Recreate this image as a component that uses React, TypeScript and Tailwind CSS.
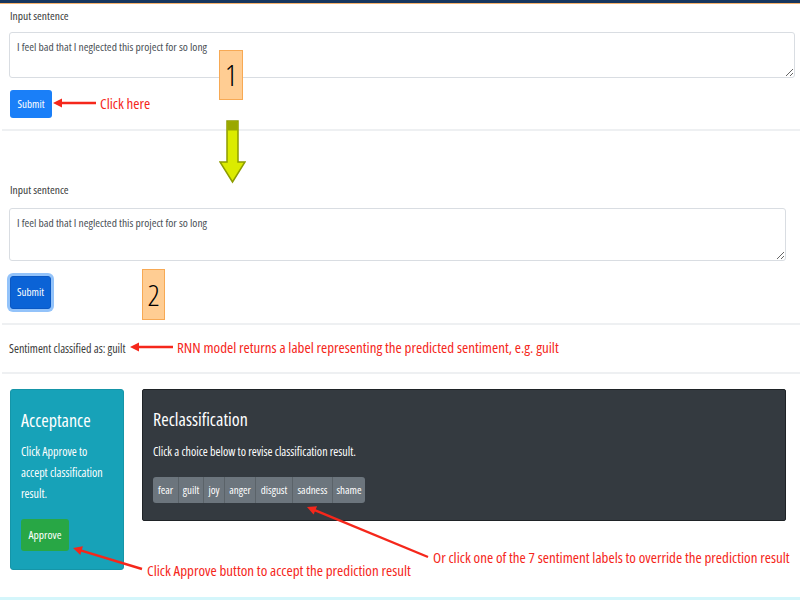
const RED = '#f5271b';

function arrowHead(x1: number, y1: number, x2: number, y2: number, len = 9, half = 4.5) {
  const dx = x2 - x1;
  const dy = y2 - y1;
  const d = Math.hypot(dx, dy);
  const ux = dx / d;
  const uy = dy / d;
  const bx = x2 - ux * len;
  const by = y2 - uy * len;
  const px = -uy * half;
  const py = ux * half;
  return `${x2},${y2} ${bx + px},${by + py} ${bx - px},${by - py}`;
}

function RedArrow({ x1, y1, x2, y2 }: { x1: number; y1: number; x2: number; y2: number }) {
  const d = Math.hypot(x2 - x1, y2 - y1);
  const ex = x2 - ((x2 - x1) / d) * 7;
  const ey = y2 - ((y2 - y1) / d) * 7;
  return (
    <g>
      <line x1={x1} y1={y1} x2={ex} y2={ey} stroke={RED} strokeWidth={2.4} />
      <polygon points={arrowHead(x1, y1, x2, y2)} fill={RED} />
    </g>
  );
}

const labels = [
  { t: 'fear', w: 'w-[25px]' },
  { t: 'guilt', w: 'w-[25px]' },
  { t: 'joy', w: 'w-[21px]' },
  { t: 'anger', w: 'w-[31px]' },
  { t: 'disgust', w: 'w-[37px]' },
  { t: 'sadness', w: 'w-[40px]' },
  { t: 'shame', w: 'w-[33px]' },
];

export default function App() {
  return (
    <div className="relative flex h-[600px] w-[800px] flex-col overflow-hidden bg-white font-['Open_Sans',sans-serif] text-[#3a3a3a] [font-stretch:75%]">
      <div className="h-[3px] bg-[#17375e]" />
      <div className="h-[1px] bg-[#f7b26b]" />

      {/* Section 1 */}
      <section className="px-[9px]">
        <div className="flex h-[24px] items-center pl-[1px] text-[11.5px]">Input sentence</div>
        <textarea
          readOnly
          defaultValue="I feel bad that I neglected this project for so long"
          className="mt-[4px] block h-[46px] w-[786px] rounded-[3px] border border-[#d9dde2] px-[7px] py-[6px] text-[11.5px] leading-[16px] text-[#4a5056] outline-none"
        />
        <button className="ml-[1px] mt-[12px] flex h-[28px] w-[42px] items-center justify-center rounded-[3px] bg-[#1a7ff8] text-[11px] text-white">
          Submit
        </button>
      </section>
      <div className="ml-[2px] mt-[11px] h-[2px] bg-[#eef0f2]" />

      {/* Section 2 */}
      <section className="px-[9px]">
        <div className="mt-[47px] flex h-[24px] items-center pl-[1px] text-[11.5px]">Input sentence</div>
        <textarea
          readOnly
          defaultValue="I feel bad that I neglected this project for so long"
          className="mt-[6px] block h-[53px] w-[777px] rounded-[3px] border border-[#d9dde2] px-[7px] py-[6px] text-[11.5px] leading-[16px] text-[#4a5056] outline-none"
        />
        <button className="ml-[1px] mt-[15px] flex h-[33px] w-[41px] items-center justify-center rounded-[3px] border border-[#0a58c4] bg-[#0b63d6] text-[11px] text-white ring-[3px] ring-[#93c3fa]">
          Submit
        </button>
      </section>
      <div className="ml-[2px] mt-[14px] h-[2px] bg-[#eef0f2]" />

      <div className="mt-[12px] flex h-[24px] items-center pl-[9px] text-[12px]">Sentiment classified as: guilt</div>
      <div className="ml-[2px] mt-[11px] h-[2px] bg-[#eef0f2]" />

      {/* Cards */}
      <div className="mt-[15px] flex items-start gap-[18px] pl-[10px]">
        <div className="h-[181px] w-[114px] rounded-[3px] border border-[#1595a8] bg-[#17a2b8] px-[10px] text-white">
          <div className="pt-[18px] text-[18px] font-medium leading-[24px]">Acceptance</div>
          <div className="mt-[9px] text-[12px] leading-[21px]">
            Click Approve to
            <br />
            accept classification
            <br />
            result.
          </div>
          <button className="mt-[15px] flex h-[32px] w-[48px] items-center justify-center rounded-[3px] bg-[#28a745] text-[11.5px] text-white">
            Approve
          </button>
        </div>

        <div className="h-[132px] w-[644px] rounded-[2px] border border-[#1f2327] bg-[#343a40] px-[10px] text-white">
          <div className="pt-[17px] text-[18px] font-medium leading-[24px]">Reclassification</div>
          <div className="mt-[11px] text-[12px] leading-[20px]">Click a choice below to revise classification result.</div>
          <div className="mt-[15px] flex h-[26px] w-fit overflow-hidden rounded-[3px]">
            {labels.map((l, i) => (
              <button
                key={l.t}
                className={`${l.w} flex h-[26px] items-center justify-center bg-[#6c757d] text-[11px] text-white ${i > 0 ? 'border-l border-[#5b6369]' : ''}`}
              >
                {l.t}
              </button>
            ))}
          </div>
        </div>
      </div>

      <div className="mt-auto h-[3px] bg-[#d4f6fb]" />

      {/* Annotations */}
      <div className="absolute left-[219px] top-[50px] flex h-[50px] w-[24px] items-center justify-center border border-[#f7a954] bg-[#ffcd93] text-[30px] font-light leading-none text-black">
        1
      </div>
      <div className="absolute left-[142px] top-[269px] flex h-[51px] w-[23px] items-center justify-center border border-[#f7a954] bg-[#ffcd93] text-[30px] font-light leading-none text-black">
        2
      </div>

      <svg className="absolute left-[219px] top-[120px] h-[64px] w-[27px]" viewBox="0 0 27 64">
        <polygon points="8,1 19,1 19,42 26,42 13.5,62 1,42 8,42" fill="#dbeb00" stroke="#8d9c00" strokeWidth="1.5" />
        <rect x="8.5" y="1.5" width="10" height="9" fill="#9aa800" />
      </svg>

      <svg className="pointer-events-none absolute left-0 top-0 h-[600px] w-[800px]" viewBox="0 0 800 600">
        <RedArrow x1={96} y1={103} x2={53} y2={103} />
        <RedArrow x1={173} y1={347} x2={130} y2={347} />
        <RedArrow x1={428} y1={557} x2={307} y2={507} />
        <RedArrow x1={142} y1={569} x2={73} y2={548} />
      </svg>

      <div className="absolute left-[100px] top-[93px] text-[15px] leading-[20px] text-[#f5271b]">Click here</div>
      <div className="absolute left-[177px] top-[337px] text-[15px] leading-[20px] text-[#f5271b]">
        RNN model returns a label representing the predicted sentiment, e.g. guilt
      </div>
      <div className="absolute left-[433px] top-[547px] text-[15px] leading-[20px] text-[#f5271b]">
        Or click one of the 7 sentiment labels to override the prediction result
      </div>
      <div className="absolute left-[147px] top-[560px] text-[15px] leading-[20px] text-[#f5271b]">
        Click Approve button to accept the prediction result
      </div>
    </div>
  );
}
